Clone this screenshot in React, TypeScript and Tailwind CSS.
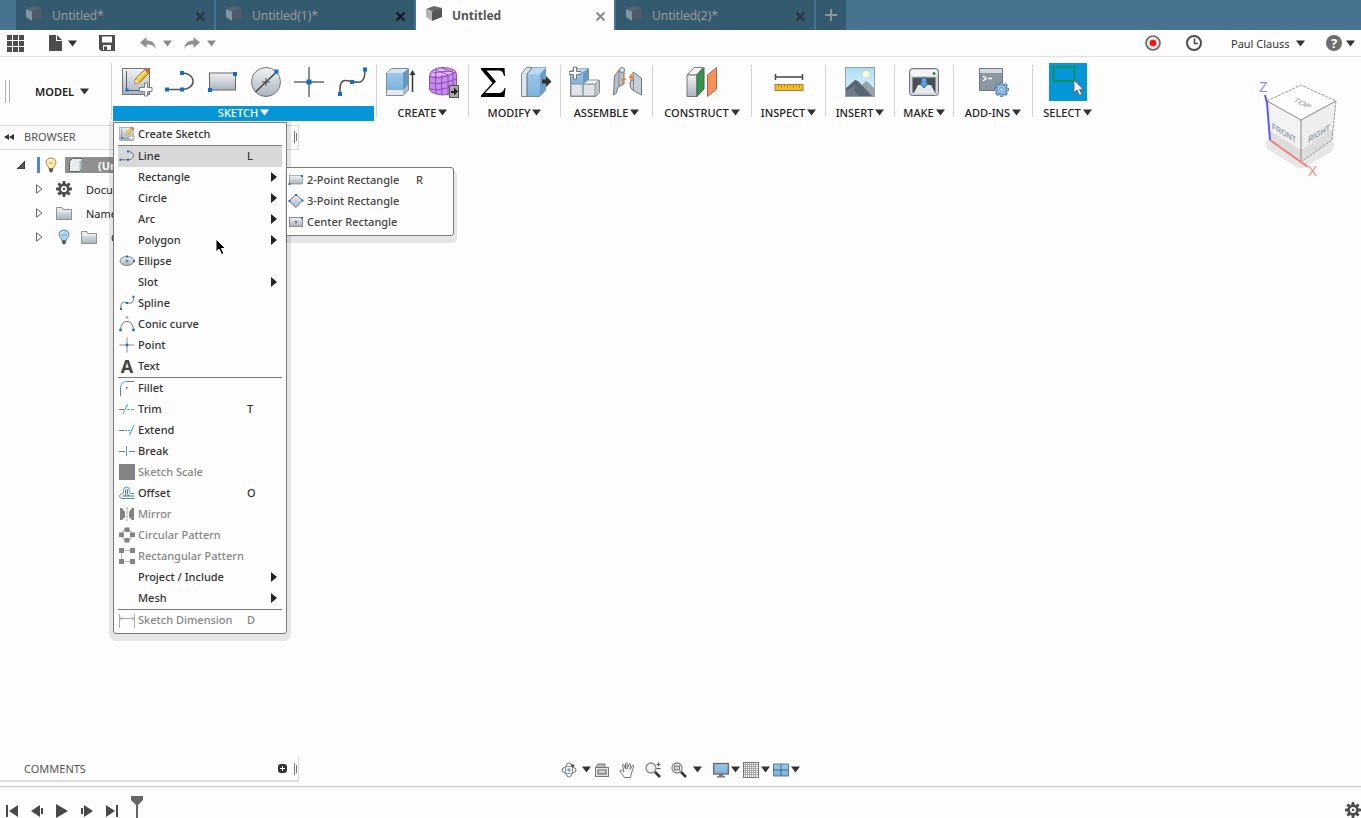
import type { ReactNode } from 'react';

interface MenuEntry {
  label: string; icon?: ReactNode; shortcut?: string;
  submenu?: boolean; disabled?: boolean; active?: boolean;
}

interface ToolGroup {
  label: string; width: string; icons: ReactNode[];
}

/* ---------- small glyphs ---------- */

const Caret = ({ className = 'fill-[#333]' }: { className?: string }) => (
  <svg viewBox="0 0 9 7" className={`w-[9px] h-[7px] shrink-0 ${className}`}><path d="M0 0.5h9L4.5 6.5z" /></svg>
);

const Arrow = () => (
  <svg viewBox="0 0 6 10" className="w-[6px] h-[10px] fill-[#222]"><path d="M0 0l6 5-6 5z" /></svg>
);

const Grip = () => (
  <svg viewBox="0 0 4 12" className="w-[4px] h-[12px]"><path d="M0.5 0v12M2.5 2v8" stroke="#777" /></svg>
);

const Cube = ({ active }: { active?: boolean }) => (
  <svg viewBox="0 0 18 18" className="w-[18px] h-[18px] shrink-0">
    <path d="M1 4l8-3 8 2-8 4z" fill={active ? '#6b6b6b' : '#566572'} />
    <path d="M1 4l6 2.500v9.500L1 12z" fill={active ? '#b5b5b5' : '#8496a1'} />
    <path d="M7 6.500L17 3v9L7 16z" fill={active ? '#555' : '#4b5a66'} />
  </svg>
);

const CloseX = ({ color }: { color: string }) => (
  <svg viewBox="0 0 11 11" className="w-[11px] h-[11px]"><path d="M1.500 1.500l8 8M9.500 1.500l-8 8" stroke={color} strokeWidth="2" /></svg>
);

const Gear = ({ className = 'w-[16px] h-[16px]' }: { className?: string }) => (
  <svg viewBox="-8 -8 16 16" className={className}>
    {[0, 45, 90, 135, 180, 225, 270, 315].map(a => (
      <path key={a} d="M-1.700 -5l.5 -3h2.400l.5 3z" fill="#4d4d4d" transform={`rotate(${a})`} />
    ))}
    <circle r="4.300" fill="none" stroke="#4d4d4d" strokeWidth="2.400" />
    <circle r="1.300" fill="#4d4d4d" />
  </svg>
);

const Bulb = ({ color, edge }: { color: string; edge: string }) => (
  <svg viewBox="0 0 12 16" className="w-[12px] h-[16px] shrink-0">
    <path d="M6 1C3 1 1 3 1 5.500 1 8 3.500 9 3.800 11.500h4.400C8.500 9 11 8 11 5.500 11 3 9 1 6 1z" fill={color} stroke={edge} />
    <path d="M4 5.500l1 1 1-1 1 1 1-1" fill="none" stroke={edge} strokeWidth=".8" />
    <path d="M4 11.500h4V14L6.500 15.500h-1L4 14z" fill="#5c5c5c" />
    <path d="M3.500 4.500Q4 2.800 5.500 2.600" stroke="#fff" fill="none" />
  </svg>
);

const Folder = () => (
  <svg viewBox="0 0 16 14" className="w-[16px] h-[14px] shrink-0">
    <path d="M.5 13.500V1.500h5.500l1 2h8.500v10z" fill="url(#steel)" stroke="#8b929b" />
    <path d="M1 5h14" stroke="#eef1f4" />
  </svg>
);

/* shared gradients, referenced by id from every icon */
const Defs = () => (
  <svg className="absolute w-0 h-0" aria-hidden="true">
    <defs>
      <linearGradient id="steel" x1="0" y1="0" x2="0" y2="1"><stop offset="0" stopColor="#f1f3f5" /><stop offset="1" stopColor="#a9b3bf" /></linearGradient>
      <linearGradient id="sky" x1="0" y1="0" x2="0" y2="1"><stop offset="0" stopColor="#a9dcf5" /><stop offset="1" stopColor="#e8f6fb" /></linearGradient>
      <linearGradient id="blue" x1="0" y1="0" x2="0" y2="1"><stop offset="0" stopColor="#9cc8ea" /><stop offset="1" stopColor="#7db2dc" /></linearGradient>
    </defs>
  </svg>
);

const Icon = ({ children }: { children: ReactNode }) => (
  <svg viewBox="0 0 32 32" className="w-[32px] h-[32px]">{children}</svg>
);

const Dot = ({ x, y, s = 4 }: { x: number; y: number; s?: number }) => (
  <rect x={x - s / 2} y={y - s / 2} width={s} height={s} fill="#0e6fd0" />
);

/* ---------- ribbon icons ---------- */

const createSketchArt = (
  <>
    <rect x="1.500" y="2.500" width="27" height="26" fill="url(#steel)" stroke="#6e7378" />
    <path d="M5.500 5v19.500M5 24.500h16" stroke="#55606b" />
    <path d="M13.500 17.500l1-4.500L25 2.500l4 3.500-10.500 10.500z" fill="#f7c325" stroke="#8a6a1e" />
    <path d="M16.500 13l8.500-8.500" stroke="#fff0a0" strokeWidth="1.500" />
    <path d="M23.500 4L25.500 2q2.500-.5 3.500 3l-2 2.500z" fill="#c66a51" />
    <path d="M13.500 17.500l1-4 3.500 3z" fill="#f3e2c0" />
    <path d="M23.500 17v4.500h-5v4h5V30h3v-4.500h4.500v-4h-4.500V17z" fill="#fff" stroke="#7b8085" />
    <Dot x={6} y={24} s={3} />
  </>
);
const lineArt = (
  <>
    <path d="M2 23.500h15M17 7c6-.5 12 2.500 12 8.500 0 5-5 8-12 8" fill="none" stroke="#555" strokeWidth="1.500" />
    <Dot x={3} y={23.500} /><Dot x={18} y={23.500} /><Dot x={18} y={7} />
  </>
);
const rectArt = (
  <>
    <rect x="2.500" y="7" width="26" height="17" fill="url(#steel)" stroke="#666" />
    <Dot x={3} y={24} /><Dot x={28} y={8} />
  </>
);
const splineArt = (
  <>
    <path d="M4 27C3 10 11 15 16 15.500S29 20 29 4" fill="none" stroke="#555" strokeWidth="1.600" />
    <Dot x={4} y={28} /><Dot x={16} y={16} /><Dot x={29} y={3.500} />
  </>
);
const pointArt = (
  <>
    <path d="M16 1v30M1 16h30" stroke="#8d8d8d" strokeWidth="2" />
    <Dot x={16} y={16} s={5} />
  </>
);

const SKETCH_ICONS: ReactNode[] = [
  createSketchArt, lineArt, rectArt,
  <>
    <circle cx="16" cy="16" r="14.500" fill="url(#steel)" stroke="#777" />
    <path d="M16 12v8M12 16h8" stroke="#777" strokeWidth="1.500" />
    <path d="M5.500 26L26.500 6" stroke="#444" strokeWidth="1.500" />
    <Dot x={26.500} y={5.500} />
  </>,
  pointArt, splineArt,
];

const GROUPS: ToolGroup[] = [
  {
    label: 'CREATE', width: 'w-[92px]', icons: [
      <>
        <path d="M1.500 7L7 2.500h16.500V24L18 29.500H1.500z" fill="#b6bcc4" stroke="#828b95" />
        <path d="M2 7h16v17H2z" fill="url(#blue)" /><path d="M2 7l5-4h16l-5 4z" fill="#d3e7f5" />
        <path d="M18 7l5-4v16l-5 5z" fill="#6597bf" />
        <path d="M2 24h16v5H2z" fill="#e6e9ed" />
        <path d="M27.500 26V8" stroke="#333" strokeWidth="1.500" /><path d="M27.500 4l3 5h-6z" fill="#333" />
      </>,
      <>
        <path d="M1.500 10Q2 2 15 1.500 28 2 28.500 8v14Q28 28 15 29 2 28 1.500 23z" fill="#c98af0" stroke="#8d52b3" />
        <path d="M3 10Q5 3 14 2.500 24 2 27 6 20 9 19 9z" fill="#e3bbf8" />
        <path d="M2 11q9 2 17-1l9-4M2 17q9 2 17-1l9-3M2 23q9 2 17-1l9-3M8 4q-1 12 0 24M14 9q-1 10 0 19M20 9v20M25 6v20M8 4l12 5M14 2l11 4M5 7q12-2 20-2" fill="none" stroke="#8546ac" strokeWidth=".9" />
        <rect x="21.500" y="19.500" width="9" height="12" fill="#aaa" stroke="#555" />
        <path d="M23 25h3v-3.500l4 4-4 4V27h-3z" fill="#222" />
      </>,
    ],
  },
  {
    label: 'MODIFY', width: 'w-[92px]', icons: [
      <path key="s" d="M4 2h23.500l.5 8h-1c-1-4-2-5.500-6-5.500H9.500l9.500 11L8 27h13c4 0 5.500-1.500 6.500-5h1L27.500 31H4v-1.500L15.500 17 4 3.500z" fill="#000" />,
      <>
        <path d="M1.500 8l5-6.500h19V24l-6 6.500h-18z" fill="#dfe4e9" stroke="#7d8791" />
        <path d="M7 8h13v22H7z" fill="url(#blue)" /><path d="M7 8l5-6.500h14L20 8z" fill="#bbdaf1" />
        <path d="M20 8l6-6.500V24l-6 6z" fill="#6b9bc4" />
        <path d="M7 8v22M7 8l5-6" stroke="#668" />
        <path d="M22 13.500h4v-3.500l5.500 5.500-5.500 5.500v-3.500h-4z" fill="#333" />
      </>,
    ],
  },
  {
    label: 'ASSEMBLE', width: 'w-[92px]', icons: [
      <>
        <path d="M1.500 5.500l4-3h14v12h11v12l-4 4h-25z" fill="#c0c6ce" stroke="#7f8790" />
        <path d="M2 6h12v12H2z" fill="url(#blue)" /><path d="M14 6l5-4v12l-5 4z" fill="#679ac5" /><path d="M2 6l4-3.500h13L14 6z" fill="#bedbf0" />
        <path d="M2 18h12v12H2zM14 18h12v12H14z" fill="#e0e4e9" stroke="#8c939c" />
        <path d="M14 18l5-4h11l-4 4z" fill="#f3f5f7" stroke="#8c939c" />
        <path d="M4.500 1v4.500H0v3h4.500V13h3V8.500H12v-3H7.500V1z" fill="#fff" stroke="#6d7580" />
      </>,
      <>
        <path d="M2.500 10L7 4q3-3 5 0v14l-6 3-1.500 6-3 2z" fill="#bac1ca" stroke="#6f7780" />
        <path d="M7 4.500v16" stroke="#7d858e" /><circle cx="10" cy="4" r="2.500" fill="#e5e8eb" stroke="#777" />
        <path d="M18 17q0-3 3-3V6l8.500 6v17l-9-5q-3-2-2.500-7z" fill="#c8ced5" stroke="#6f7780" />
        <path d="M21.500 12v13" stroke="#7d858e" />
        <path d="M11 17v-4h3M19 8v6M17 11h4" stroke="#f0781e" strokeWidth="1.500" fill="none" />
      </>,
    ],
  },
  {
    label: 'CONSTRUCT', width: 'w-[99px]', icons: [
      <>
        <path d="M1 9l7-7.500h9L11 9z" fill="#fafafa" stroke="#777" />
        <path d="M1 9h10v21.500H1z" fill="url(#steel)" stroke="#777" />
        <path d="M11 9l7-7.500V23l-7 7.500z" fill="#2f9a46" stroke="#555" />
        <path d="M21.500 9l9-7.500V23l-9 7.500z" fill="#f99158" stroke="#a56846" />
      </>,
    ],
  },
  {
    label: 'INSPECT', width: 'w-[74px]', icons: [
      <>
        <path d="M2.500 8v6M29.500 8v6M3 11h26" stroke="#444" strokeWidth="1.500" />
        <rect x="2" y="18.500" width="28" height="6" fill="#f8bd22" stroke="#a08343" />
        <path d="M5.500 19v2M8.500 19v3M11.500 19v2M14.500 19v3M17.500 19v2M20.500 19v3M23.500 19v2M26.500 19v3" stroke="#b98b23" />
      </>,
    ],
  },
  {
    label: 'INSERT', width: 'w-[69px]', icons: [
      <>
        <rect x="1.500" y="1.500" width="29" height="29" fill="url(#sky)" stroke="#9a9fa5" />
        <circle cx="22" cy="8" r="3" fill="#fffbd5" stroke="#fff8a5" />
        <path d="M15 22l7-7 2 1 6 6v8H15z" fill="#98a2ab" />
        <path d="M2 22l9-8 3 1 14 15H2z" fill="#586673" />
        <path d="M2 25l10-6-2 6 6 5H2z" fill="#6d7a87" />
      </>,
    ],
  },
  {
    label: 'MAKE', width: 'w-[59px]', icons: [
      <>
        <rect x="1.500" y="2.500" width="29" height="27" rx="3" fill="#d2d6db" stroke="#6e757d" />
        <rect x="3" y="4" width="26" height="6" rx="2" fill="#f2f4f5" />
        <rect x="4.500" y="11.500" width="23" height="15" fill="#4b5056" stroke="#8c929a" />
        <path d="M10 19h13l4 8H6z" fill="#e8ebee" />
        <path d="M13.500 12h5v5h2l-4.500 5-4.500-5h2z" fill="#5ba4e6" stroke="#35679a" />
        <circle cx="26" cy="7.500" r="1.500" fill="#159426" />
      </>,
    ],
  },
  {
    label: 'ADD-INS', width: 'w-[79px]', icons: [
      <>
        <path d="M2.500 2.500h23v22h-23z" fill="#8c96a3" stroke="#6d7885" />
        <path d="M3 3h22v4H3z" fill="#d4dae1" />
        <path d="M6 10l3 2.500L6 15M11 12.500h4" stroke="#fff" fill="none" strokeWidth="1.500" />
        <g transform="translate(24.500 23.500)">
          {[0, 45, 90, 135, 180, 225, 270, 315].map(a => (
            <path key={a} d="M-1.800 -4l.6 -3h2.400l.6 3z" fill="#8fbde3" stroke="#507fa8" transform={`rotate(${a})`} />
          ))}
          <circle r="4.500" fill="#a1caeb" stroke="#6794bb" /><circle r="1.800" fill="#fff" stroke="#507fa8" />
        </g>
      </>,
    ],
  },
];

/* ---------- menu icons ---------- */

const Mini = ({ children, box = '0 0 16 16' }: { children: ReactNode; box?: string }) => (
  <svg viewBox={box} className="w-[16px] h-[16px] shrink-0">{children}</svg>
);
const GREY = '#838383';

const MENU: MenuEntry[][] = [
  [{ label: 'Create Sketch', icon: <Mini box="0 0 32 32">{createSketchArt}</Mini> }],
  [
    { label: 'Line', icon: <Mini box="0 0 32 32">{lineArt}</Mini>, shortcut: 'L', active: true },
    { label: 'Rectangle', submenu: true },
    { label: 'Circle', submenu: true },
    { label: 'Arc', submenu: true },
    { label: 'Polygon', submenu: true },
    {
      label: 'Ellipse', icon: (
        <Mini>
          <ellipse cx="8" cy="8" rx="7" ry="4.500" fill="url(#steel)" stroke="#808890" />
          <path d="M8 6.500v3M6.500 8h3" stroke="#555" strokeWidth=".8" />
          <Dot x={8} y={3.500} s={2} /><Dot x={15} y={8} s={2} />
        </Mini>
      ),
    },
    { label: 'Slot', submenu: true },
    { label: 'Spline', icon: <Mini box="0 0 32 32">{splineArt}</Mini> },
    {
      label: 'Conic curve', icon: (
        <Mini>
          <path d="M1.500 14Q2 5.500 8 5.500t6.500 8.500" fill="none" stroke="#777" />
          <path d="M8 0v3M6.500 1.500h3" stroke="#888" strokeWidth=".8" />
          <Dot x={1.500} y={14} s={2.500} /><Dot x={14.500} y={14} s={2.500} />
        </Mini>
      ),
    },
    { label: 'Point', icon: <Mini box="0 0 32 32">{pointArt}</Mini> },
    { label: 'Text', icon: <span className="w-[16px] text-center text-[18px] leading-[20px] font-bold text-[#444]" aria-hidden="true">A</span> },
  ],
  [
    {
      label: 'Fillet', icon: (
        <Mini>
          <path d="M1.500 16V8M8 1.500h7" stroke="#777" fill="none" /><path d="M1.500 8q0-6.500 6.500-6.500" stroke="#4aa3df" fill="none" />
          <path d="M7 7h1.500v1.500H7z" fill="#555" />
        </Mini>
      ),
    },
    {
      label: 'Trim', shortcut: 'T', icon: (
        <Mini><path d="M0 8.500h5" stroke="#777" /><path d="M8 8.500h8" stroke="#4aa3df" strokeDasharray="3 1" /><path d="M4 13L8.500 3" stroke="#3d96d6" /></Mini>
      ),
    },
    {
      label: 'Extend', icon: (
        <Mini><path d="M0 8.500h5" stroke="#777" /><path d="M6 8.500h5" stroke="#4aa3df" strokeDasharray="2 1" /><path d="M10.500 13L15 3" stroke="#3d96d6" /></Mini>
      ),
    },
    { label: 'Break', icon: <Mini><path d="M0 8.500h6M10 8.500h6" stroke="#777" /><path d="M7.500 3v10" stroke="#4aa3df" /></Mini> },
    { label: 'Sketch Scale', disabled: true, icon: <Mini><path d="M0 0h16v16H0z" fill={GREY} /></Mini> },
    {
      label: 'Offset', shortcut: 'O', icon: (
        <Mini>
          <path d="M15.500 8.500H11Q10 8 10.500 5.500 10.500 2 7.500 2T4.500 5.500Q5 8 4 8.500 .5 9 .5 11t2.500 2.500h12.500" fill="none" stroke="#3d96d6" />
          <path d="M15.500 11H3.500M6 11Q7 9 6.500 6q0-1.500 1-1.500T8.500 6Q8 9 9.500 11" fill="none" stroke="#666" />
        </Mini>
      ),
    },
    {
      label: 'Mirror', disabled: true, icon: (
        <Mini><path d="M1 2h2l3 4v5l-3 3H1zM15 2h-2l-3 4v5l3 3h2z" fill={GREY} /><path d="M8 1v14" stroke="#999" strokeDasharray="3 1" /></Mini>
      ),
    },
    {
      label: 'Circular Pattern', disabled: true, icon: (
        <Mini>
          <circle cx="8" cy="8" r="5.500" fill="none" stroke="#aaa" />
          <path d="M5.500 .5h5v4.500h-5zM5.500 11h5v4.500h-5zM0 5.500h5V10H0zM11 5.500h5V10h-5z" fill={GREY} />
        </Mini>
      ),
    },
    {
      label: 'Rectangular Pattern', disabled: true, icon: (
        <Mini>
          <path d="M2.500 3v10M3 2.500h10M3 13.500h10" stroke="#bbb" />
          <path d="M0 0h5v5H0zM11 0h5v5h-5zM0 11h5v5H0zM11 11h5v5h-5z" fill={GREY} />
        </Mini>
      ),
    },
    { label: 'Project / Include', submenu: true },
    { label: 'Mesh', submenu: true },
  ],
  [
    {
      label: 'Sketch Dimension', shortcut: 'D', disabled: true, icon: (
        <Mini><path d="M.5 2v14M15.500 2v14M1 6.500h14M3 4.500l-2 2 2 2M13 4.500l2 2-2 2" stroke="#aaa" fill="none" /></Mini>
      ),
    },
  ],
];

const RECT_MENU: MenuEntry[] = [
  { label: '2-Point Rectangle', shortcut: 'R', icon: <Mini box="0 0 32 32">{rectArt}</Mini> },
  {
    label: '3-Point Rectangle', icon: (
      <Mini>
        <path d="M8 1.500l6.500 6L8 14.500 1 8z" fill="url(#steel)" stroke="#777" />
        <Dot x={8} y={2} s={2} /><Dot x={1.500} y={8} s={2} /><Dot x={14.500} y={7.500} s={2} />
      </Mini>
    ),
  },
  {
    label: 'Center Rectangle', icon: (
      <Mini>
        <rect x="1.500" y="3.500" width="13" height="9" fill="url(#steel)" stroke="#8a8a8a" />
        <path d="M8 6.500v3M6.500 8h3" stroke="#555" strokeWidth=".8" /><Dot x={14} y={4} s={2} />
      </Mini>
    ),
  },
];

const SketchMenu = () => (
  <div role="menu" aria-label="Sketch" className="absolute z-20 left-0 top-full w-[174px] mt-px px-1 pt-px pb-[2px] bg-[#fdfdfd] border border-[#7b7b7b] rounded-b-[3px] shadow-[0_3px_0_4px_rgba(0,0,0,0.09)]">
    {MENU.map((section, i) => (
      <div key={i} className={i > 0 ? 'border-t border-[#7d7d7d]' : ''}>
        {section.map(item => (
          <button key={item.label} role="menuitem" disabled={item.disabled}
            className={`flex w-full h-[21px] items-center pl-px pb-[2px] text-left ${item.active ? 'bg-[#d8d8d8]' : ''} ${item.disabled ? 'text-[#868686]' : 'text-[#333]'}`}>
            <span className="flex w-[16px] mr-[3px] justify-center shrink-0">{item.icon}</span>
            <span className="w-[109px] shrink-0 whitespace-nowrap">{item.label}</span>
            <span className="w-[24px] shrink-0">{item.shortcut}</span>
            {item.submenu && <Arrow />}
          </button>
        ))}
      </div>
    ))}
    {/* Rectangle flyout */}
    <div role="menu" aria-label="Rectangle" className="absolute left-full top-[44px] w-[168px] py-[2px] bg-[#fdfdfd] border border-[#7b7b7b] rounded-r-[3px] shadow-[1px_5px_0_2px_rgba(0,0,0,0.09)]">
      {RECT_MENU.map(item => (
        <button key={item.label} role="menuitem" className="flex w-full h-[21px] items-center pl-px pb-[2px] text-left text-[#444]">
          {item.icon}
          <span className="w-[109px] ml-[3px] shrink-0 whitespace-nowrap">{item.label}</span>
          <span>{item.shortcut}</span>
        </button>
      ))}
    </div>
    <svg viewBox="0 0 12 18" className="absolute left-[101px] top-[115px] w-[12px] h-[18px]" aria-hidden="true">
      <path d="M1 1v13l3-3 2.500 5.500 2.500-1-2.500-5h4z" fill="#000" stroke="#fff" />
    </svg>
  </div>
);

/* ---------- page parts ---------- */

const TABS = [
  { name: 'Untitled*', x: '#26333d' },
  { name: 'Untitled(1)*', x: '#0d1420' },
  { name: 'Untitled', x: '#8a8a8a', active: true },
  { name: 'Untitled(2)*', x: '#26333d' },
];

const TabBar = () => (
  <nav aria-label="Documents" className="flex h-[30px] pl-4 gap-[2px] bg-[#457390]">
    {TABS.map(t => (
      <div key={t.name} className={`flex w-[198px] items-center pl-[9px] pr-2 ${t.active ? 'bg-[#fdfdfd] text-[#555] font-bold' : 'bg-[#345a70] text-[#9b9b9b]'}`}>
        <button className="flex flex-1 items-center gap-[9px] pt-[2px] text-[12px] leading-[16px]">
          <span className="pb-1"><Cube active={t.active} /></span>{t.name}
        </button>
        <button aria-label={`Close ${t.name}`} className="pt-[2px]"><CloseX color={t.x} /></button>
      </div>
    ))}
    <button aria-label="New tab" className="flex w-[30px] items-center justify-center bg-[#345a70]">
      <svg viewBox="0 0 12 12" className="w-[12px] h-[12px]"><path d="M6 0v12M0 6h12" stroke="#8e9499" strokeWidth="2" /></svg>
    </button>
  </nav>
);

const Undo = ({ flip }: { flip?: boolean }) => (
  <svg viewBox="0 0 16 12" className={`w-[16px] h-[12px] ${flip ? '-scale-x-100' : ''}`}>
    <path d="M0 5.500L6.500 0v3.500C12 3.500 15.500 6 15.500 12 14 8.500 12 7.500 6.500 7.500V11z" fill="#919191" />
  </svg>
);

const QuickBar = () => (
  <div className="flex h-[27px] items-center pl-[7px] pr-[6px] border-b border-[#e2e2e2]">
    <button aria-label="Data panel">
      <svg viewBox="0 0 17 17" className="w-[17px] h-[17px]"><path d="M0 0h5v5H0zM6 0h5v5H6zM12 0h5v5h-5zM0 6h5v5H0zM6 6h5v5H6zM12 6h5v5h-5zM0 12h5v5H0zM6 12h5v5H6zM12 12h5v5h-5z" fill="#4d4d4d" /></svg>
    </button>
    <button aria-label="File" className="flex items-center gap-[6px] ml-[25px]">
      <svg viewBox="0 0 13 16" className="w-[13px] h-[16px]"><path d="M0 0h7v6h6v10H0z" fill="#4d4d4d" /><path d="M8 0l5 5H8z" fill="#4d4d4d" /></svg>
      <Caret />
    </button>
    <button aria-label="Save" className="ml-[22px]">
      <svg viewBox="0 0 16 16" className="w-[16px] h-[16px]"><path d="M0 0h16v16H2l-2-2z" fill="#4d4d4d" /><path d="M3 1.500h10v6H3zM4 10h8v5H4z" fill="#fdfdfd" /><path d="M5 11.500h3V15H5z" fill="#4d4d4d" /></svg>
    </button>
    <button aria-label="Undo" className="flex items-center gap-[7px] ml-[25px]"><Undo /><Caret className="fill-[#8a8a8a]" /></button>
    <button aria-label="Redo" className="flex items-center gap-[7px] ml-[12px]"><Undo flip /><Caret className="fill-[#8a8a8a]" /></button>

    <div className="flex items-center ml-auto">
      <button aria-label="Record">
        <svg viewBox="0 0 16 16" className="w-[16px] h-[16px]"><circle cx="8" cy="8" r="7" fill="#e6e6e6" stroke="#6b6b6b" strokeWidth="1.700" /><circle cx="8" cy="8" r="3.300" fill="#f11" /></svg>
      </button>
      <button aria-label="Job status" className="ml-[25px]">
        <svg viewBox="0 0 16 16" className="w-[16px] h-[16px]"><circle cx="8" cy="8" r="7" fill="none" stroke="#4d4d4d" strokeWidth="2" /><path d="M8.500 3.500V8.500H12" fill="none" stroke="#4d4d4d" strokeWidth="1.600" /></svg>
      </button>
      <button className="flex w-[74px] items-center justify-between ml-[29px] whitespace-nowrap text-[#333]">Paul Clauss<Caret /></button>
      <button aria-label="Help" className="flex items-center gap-1 ml-[21px]">
        <span className="w-[16px] h-[16px] rounded-full bg-[#6e6e6e] text-center text-[13px] leading-[16px] font-bold text-white">?</span>
        <Caret />
      </button>
    </div>
  </div>
);

const Divider = () => <div className="w-px h-[52px] mt-[2px] shrink-0 bg-[#d2d2d2]" />;

const Ribbon = () => (
  <div className="flex items-start pt-[6px] pb-[3px] h-[68px] font-medium text-[#222]">
    <div className="flex w-[112px] h-[56px] items-center pl-[5px] border-r border-[#d2d2d2] shrink-0">
      <div className="w-[5px] h-[23px] border-x border-[#b0b0b0]" />
      <button className="flex items-center gap-[6px] ml-[25px] font-semibold">MODEL <Caret /></button>
    </div>
    <div className="relative w-[261px] ml-px mr-[2px] shrink-0">
      <div className="flex h-[43px] pl-[2px]">
        {SKETCH_ICONS.map((art, i) => (
          <button key={i} aria-label="Sketch tool" className="flex w-[43px] h-[38px] items-center justify-center"><Icon>{art}</Icon></button>
        ))}
      </div>
      <button aria-expanded="true" className="flex w-full h-[15px] items-center justify-center gap-[2px] pb-[2px] leading-[13px] bg-[#0696d7] text-white">
        SKETCH <Caret className="fill-white" />
      </button>
      <SketchMenu />
    </div>
    {GROUPS.map(g => (
      <div key={g.label} className={`flex shrink-0 ${g.width}`}>
        <Divider />
        <div className="flex-1">
          <div className="flex h-[43px] justify-center">
            {g.icons.map((art, i) => (
              <button key={i} aria-label={g.label} className="flex w-[43px] h-[38px] items-center justify-center"><Icon>{art}</Icon></button>
            ))}
          </div>
          <button className="flex w-full h-[15px] items-center justify-center gap-[2px] pb-[2px] leading-[13px] whitespace-nowrap">{g.label} <Caret /></button>
        </div>
      </div>
    ))}
    <div className="flex w-[70px] shrink-0">
      <Divider />
      <div className="flex-1">
        <div className="flex h-[43px] justify-center">
          <button aria-label="Select tool" className="w-[38px] h-[38px] bg-[#0696d7]">
            <svg viewBox="0 0 38 38" className="w-[38px] h-[38px]">
              <rect x="4.500" y="4" width="21" height="14" fill="none" stroke="#0d9344" strokeWidth="1.600" />
              <path d="M25 17v13l3-3 2.500 5.500 2.500-1.200-2.500-5h4z" fill="#f2f2f2" stroke="#666" />
            </svg>
          </button>
        </div>
        <button className="flex w-full h-[15px] items-center justify-center gap-[2px] pb-[2px] leading-[13px]">SELECT <Caret /></button>
      </div>
    </div>
  </div>
);

const Twisty = () => (
  <svg viewBox="0 0 7 10" className="w-[7px] h-[10px] shrink-0"><path d="M.5 .8v8.400L6 5z" fill="#fff" stroke="#666" /></svg>
);

const BrowserPanel = () => (
  <aside className="w-[299px]">
    <div className="flex h-[25px] items-center pl-1 pb-px border-y border-r border-[#d9d9d9] bg-[#fbfbfb] text-[#555]">
      <button aria-label="Collapse browser">
        <svg viewBox="0 0 10 6" className="w-[10px] h-[6px]"><path d="M5 0v6L0 3zM10 0v6L5 3z" fill="#333" /></svg>
      </button>
      <h2 className="ml-[10px] leading-[13px] pb-[2px]">BROWSER</h2>
      <span className="ml-auto"><Grip /></span>
    </div>
    <ul className="pt-[3px] text-[#222]">
      <li className="flex h-6 items-center pl-[17px]">
        <svg viewBox="0 0 8 8" className="w-[8px] h-[8px]"><path d="M8 0v8H0z" fill="#555" stroke="#222" strokeWidth=".8" /></svg>
        <span className="w-[3px] h-[16px] ml-3 bg-[#4d84e8]" />
        <span className="ml-[5px]"><Bulb color="#fdebb0" edge="#9c8a56" /></span>
        <span className="flex w-[140px] h-[16px] items-center ml-2 pl-1 gap-[15px] bg-[#8f8f8f] font-bold text-white">
          <svg viewBox="0 0 14 14" className="w-[14px] h-[14px]">
            <path d="M.5 3.500l3-3h10v10l-3 3H.5z" fill="#e9ecef" stroke="#5f666d" /><path d="M10.500 3.500l3-3v10l-3 3z" fill="#aab2bb" />
          </svg>
          (Un
        </span>
      </li>
      <li className="flex h-6 items-center pl-9">
        <Twisty /><span className="ml-[13px] mr-[14px]"><Gear /></span>Docu
      </li>
      <li className="flex h-6 items-center pl-9">
        <Twisty /><span className="ml-[13px] mr-[14px]"><Folder /></span>Name
      </li>
      <li className="flex h-6 items-center pl-9">
        <Twisty /><span className="ml-[15px] mr-[11px]"><Bulb color="#a9d3f2" edge="#5d86a6" /></span><Folder /><span className="ml-[14px]">O</span>
      </li>
    </ul>
  </aside>
);

const ViewCube = () => (
  <svg viewBox="0 0 84 104" className="absolute right-[22px] top-[22px] w-[84px] h-[104px]" fontFamily="Liberation Sans, sans-serif">
    <path d="M10 62l6-2 58 0 6 5-4 8-24 14q-6 4-12 0L12 70z" fill="#e6e6e6" />
    <path d="M12 22L46 6l35 16-35 19z" fill="#fdfdfd" />
    <path d="M12 22l34 19v42L15 61z" fill="#f3f3f3" />
    <path d="M46 41l35-19-4 39-31 22z" fill="#eeeeee" />
    <path d="M14 51l32 20v12L15 61zM46 71l32-21-1 11-31 22z" fill="#dcdcdc" />
    <path d="M12 22L46 6l35 16-4 39-31 22" fill="none" stroke="#999" strokeDasharray="3 1" />
    <path d="M12 22l34 19 35-19M46 41v42" fill="none" stroke="#888" />
    <path d="M10 16l2 8 3 37" fill="none" stroke="#5b5bf0" strokeWidth="2" />
    <path d="M15 61l38 27" stroke="#f08080" strokeWidth="2" />
    <text transform="matrix(.88 .42 -.75 .5 37 22)" fontSize="9" fill="#8b959c">TOP</text>
    <text transform="matrix(.78 .46 .05 1 17 50)" fontSize="9" fontWeight="bold" fill="#93a3af">FRONT</text>
    <text transform="matrix(.78 -.46 -.05 1 53 64)" fontSize="9" fontWeight="bold" fill="#93a3af">RIGHT</text>
    <text x="4" y="13" fontSize="14" fill="#8c8cf5">Z</text>
    <text x="53" y="97" fontSize="14" fill="#f28a8a">X</text>
  </svg>
);

const NavBar = () => (
  <div className="flex items-center justify-center">
    <button aria-label="Orbit" className="flex items-center gap-[5px]">
      <svg viewBox="0 0 16 16" className="w-[16px] h-[16px]">
        <ellipse cx="8" cy="8" rx="7" ry="3.500" fill="none" stroke="#888" strokeWidth="1.200" /><ellipse cx="8" cy="8" rx="3.500" ry="7" fill="none" stroke="#888" strokeWidth="1.200" />
        <path d="M5 5h6v6H5z" fill="#fdfdfd" /><path d="M8 6v4M6 8h4" stroke="#2f8fd0" /><path d="M10 2l4 1-3 3z" fill="#444" />
      </svg>
      <Caret />
    </button>
    <button aria-label="Look at" className="ml-[3px]">
      <svg viewBox="0 0 16 16" className="w-[16px] h-[16px]"><path d="M2 5l2-3h7v3" fill="#bbb" stroke="#777" /><rect x="1.500" y="5.500" width="13" height="9" fill="#dfe3e7" stroke="#777" /><rect x="4" y="8" width="8" height="4" fill="url(#steel)" stroke="#666" /></svg>
    </button>
    <button aria-label="Pan" className="ml-[9px]">
      <svg viewBox="0 0 16 16" className="w-[16px] h-[16px]">
        <path d="M5.500 15.500L1 9q0-1.500 1.500-1L5 10 3.500 3q.5-1.500 1.500 0l1.500 4V1.500q.8-1.300 1.600 0V7L10 2q1-1 1.500.3L11 7.500l2.500-4q1.300-.5 1.300.7L12.500 11l-1 4.500z" fill="#fafafa" stroke="#777" />
      </svg>
    </button>
    <button aria-label="Zoom" className="ml-[10px]">
      <svg viewBox="0 0 16 16" className="w-[16px] h-[16px]"><circle cx="6" cy="6" r="5" fill="#edf1f4" stroke="#888" strokeWidth="1.300" /><path d="M10 10l5 5" stroke="#333" strokeWidth="2.500" /><path d="M11.500 2.500h4M13.500 .5v4M11.500 6.500h4" stroke="#555" /></svg>
    </button>
    <button aria-label="Fit" className="flex items-center gap-[6px] ml-[10px]">
      <svg viewBox="0 0 16 16" className="w-[16px] h-[16px]"><circle cx="6" cy="6" r="5" fill="#edf1f4" stroke="#888" strokeWidth="1.300" /><path d="M10 10l5 5" stroke="#333" strokeWidth="2.500" /><rect x="3.500" y="4" width="5" height="4" fill="#cdd5db" stroke="#777" /></svg>
      <Caret />
    </button>
    <button aria-label="Display settings" className="flex items-center gap-[2px] ml-[11px]">
      <svg viewBox="0 0 16 16" className="w-[16px] h-[16px]"><rect x=".7" y="1.500" width="14.600" height="10.500" fill="url(#blue)" stroke="#666" strokeWidth="1.300" /><path d="M6 12h4v2h2v1.500H4V14h2z" fill="#777" /></svg>
      <Caret />
    </button>
    <button aria-label="Grid settings" className="flex items-center gap-[2px] ml-[3px]">
      <svg viewBox="0 0 16 16" className="w-[16px] h-[16px]"><rect x=".5" y=".5" width="15" height="15" fill="#fafafa" stroke="#777" /><path d="M2.500 1v14M4.500 1v14M6.500 1v14M8.500 1v14M10.500 1v14M12.500 1v14M1 2.500h14M1 4.500h14M1 6.500h14M1 8.500h14M1 10.500h14M1 12.500h14" stroke="#999" strokeWidth=".8" /></svg>
      <Caret />
    </button>
    <button aria-label="Viewports" className="flex items-center gap-[2px] ml-[3px]">
      <svg viewBox="0 0 16 16" className="w-[16px] h-[16px]"><path d="M.5 2h15v12H.5z" fill="url(#blue)" stroke="#527ca0" /><path d="M8 2v12M0 8h16" stroke="#43698a" /></svg>
      <Caret />
    </button>
  </div>
);

const TRANSPORT = [
  { name: 'Go to start', d: 'M1 1h2v12H1zM13 1v12L4 7z' },
  { name: 'Step back', d: 'M10 1v12L1 7zM11 4h2v6h-2z' },
  { name: 'Play', d: 'M1 0v14l12-7z' },
  { name: 'Step forward', d: 'M4 1v12l9-6zM1 4h2v6H1z' },
  { name: 'Go to end', d: 'M11 1h2v12h-2zM1 1v12l9-6z' },
];

export default function App() {
  return (
    <div className="relative flex flex-col min-h-screen overflow-hidden bg-[#fdfdfd] font-['Noto_Sans',sans-serif] text-[11px] leading-[15px]">
      <Defs />
      <TabBar />
      <QuickBar />
      <div className="relative flex flex-1 flex-col">
        <Ribbon />
        <main className="flex-1"><BrowserPanel /></main>
        <ViewCube />
        <div className="grid grid-cols-[299px_1fr_299px] items-center pb-1 border-b border-[#c4c4c4]">
          <section className="flex h-[25px] items-center pl-6 border-r border-b-2 border-[#dcdcdc] text-[#555]">
            <h2>COMMENTS</h2>
            <button aria-label="Add comment" className="ml-auto mr-[7px]">
              <svg viewBox="0 0 9 9" className="w-[9px] h-[9px]"><rect width="9" height="9" rx="3" fill="#333" /><path d="M4.500 2v5M2 4.500h5" stroke="#fff" /></svg>
            </button>
            <Grip />
          </section>
          <NavBar />
        </div>
      </div>
      {/* Timeline */}
      <footer className="flex h-[31px] items-end pl-[5px]">
        <div className="flex gap-[11px]">
          {TRANSPORT.map(b => (
            <button key={b.name} aria-label={b.name}>
              <svg viewBox="0 0 14 14" className="w-[14px] h-[14px]"><path d={b.d} fill="#484848" /></svg>
            </button>
          ))}
        </div>
        <svg viewBox="0 0 12 22" className="w-[12px] h-[22px] ml-3"><path d="M0 0h12v4L7 9v13H5V9L0 4z" fill="#666" /></svg>
        <button aria-label="Preferences" className="ml-auto"><Gear /></button>
      </footer>
    </div>
  );
}
